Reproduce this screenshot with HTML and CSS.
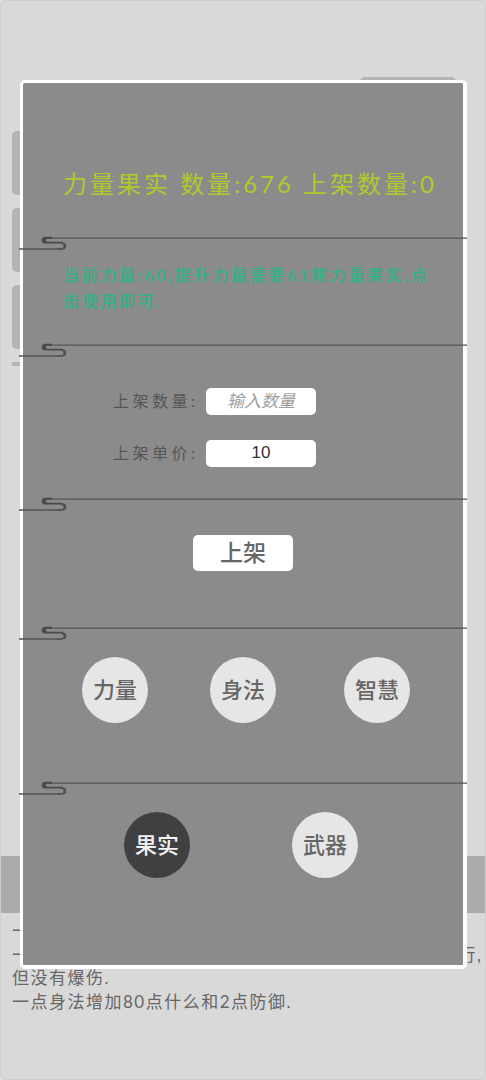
FILE: index.html
```html
<!DOCTYPE html>
<html lang="zh-CN">
<head>
    <meta charset="UTF-8">
    <meta name="viewport" content="width=device-width, initial-scale=1.0">
    <title>上架</title>
    <link rel="stylesheet" href="styles.css">
</head>
<body>

    <svg class="defs" width="0" height="0">
        <symbol id="divider" viewBox="0 0 448 16">
            <path class="line" d="M448 3.200H28"/>
            <path class="line" d="M43 14H0"/>
            <path class="hook" d="M33 1.800H26C21.500 1.800 21.500 8.600 26 8.600H44V6.800H29C26 6.800 26 3.800 29 3.800H33Z"/>
            <path class="hook-tail" d="M42 7.400H44C48.500 7.400 48.500 14.500 44 14.500H38V13.200H43C45 13.200 45 9 43 9H42Z"/>
        </symbol>
    </svg>

    <!-- 背后的页面 -->
    <div class="page">
        <div class="chip"></div>
        <div class="tabs">
            <div class="tab"></div>
            <div class="tab"></div>
            <div class="tab"></div>
            <div class="tab-end"></div>
        </div>
        <div class="band"></div>
        <div class="intro">
            <p>一点力量增加10点攻击力.</p>
            <p>一点智慧增加50点法力和5点魔法攻击,魔攻无视防御进行,<br>但没有爆伤.</p>
            <p>一点身法增加80点什么和2点防御.</p>
        </div>
    </div>

    <!-- 弹窗 -->
    <div class="modal">
        <div class="section section-title">
            <h2>力量果实 数量:676 上架数量:0</h2>
        </div>
        <svg class="divider"><use href="#divider"/></svg>

        <div class="section section-desc">
            <p>当前力量:60,提升力量需要61颗力量果实,点击使用即可.</p>
        </div>
        <svg class="divider"><use href="#divider"/></svg>

        <div class="section section-form">
            <label class="field">
                <span>上架数量:</span>
                <input type="text" placeholder="输入数量">
            </label>
            <label class="field">
                <span>上架单价:</span>
                <input type="text" value="10">
            </label>
        </div>
        <svg class="divider"><use href="#divider"/></svg>

        <div class="section section-submit">
            <button class="submit">上架</button>
        </div>
        <svg class="divider"><use href="#divider"/></svg>

        <div class="section section-stats">
            <button class="round">力量</button>
            <button class="round">身法</button>
            <button class="round">智慧</button>
        </div>
        <svg class="divider"><use href="#divider"/></svg>

        <div class="section section-kinds">
            <button class="round active">果实</button>
            <button class="round">武器</button>
        </div>
    </div>

</body>
</html>
```

FILE: styles.css
```css
body {
    margin: 0;
    font-family: Lato, "Noto Sans CJK SC", sans-serif;
    background-color: #d9d9d9;
}
.defs {
    position: absolute;
}
.line {
    fill: none;
    stroke: #555;
    stroke-width: 1.300;
}
.hook {
    fill: #4a4a4a;
}
.hook-tail {
    fill: #505050;
}
.page {
    height: 1078px;
    border: 1px solid #cfcfcf;
    border-radius: 6px;
    overflow: hidden;
}
.chip {
    width: 96px;
    height: 12px;
    margin: 76px 0 0 359px;
    background-color: #b4b4b4;
    border-radius: 5px 5px 0 0;
}
.tabs {
    display: flex;
    flex-direction: column;
    gap: 13px;
    margin: 42px 0 0 11px;
}
.tab {
    width: 20px;
    height: 64px;
    background-color: #b4b4b4;
    border-radius: 5px;
}
.tab-end {
    width: 20px;
    height: 4px;
    background-color: #b4b4b4;
}
.band {
    height: 57px;
    margin-top: 490px;
    background-color: #ababab;
}
.intro {
    padding: 6px 0 0 11px;
    color: #666;
    font-size: 17px;
    line-height: 23.500px;
    letter-spacing: 1.500px;
}
.intro p {
    margin: 0;
}
.modal {
    position: absolute;
    top: 80px;
    left: 20px;
    width: 440px;
    height: 882px;
    border: solid #fff;
    border-width: 3px 4px 4px 3px;
    border-radius: 5px;
    background-color: #8b8b8b;
}
.divider {
    display: block;
    width: 448px;
    height: 16px;
    margin: 0 -4px;
}
.section-title {
    height: 152px;
    box-sizing: border-box;
    padding: 84px 0 0 40px;
}
h2 {
    margin: 0;
    color: #aecb2c;
    font-size: 24px;
    font-weight: 400;
    line-height: 34px;
    letter-spacing: 3px;
    white-space: nowrap;
}
.section-desc {
    height: 91px;
    box-sizing: border-box;
    padding: 11px 30px 0 40px;
}
.section-desc p {
    margin: 0;
    color: #2fb384;
    font-size: 16px;
    font-weight: 500;
    line-height: 26px;
    letter-spacing: 2.700px;
}
.section-form {
    display: flex;
    flex-direction: column;
    gap: 24.500px;
    height: 138px;
    box-sizing: border-box;
    padding: 30px 0 0 90px;
}
.field {
    display: flex;
    align-items: center;
    gap: 10px;
    color: #555;
    font-size: 16px;
    line-height: 24px;
    letter-spacing: 3.500px;
}
.field span {
    width: 83px;
    padding-bottom: 1px;
    white-space: nowrap;
}
input {
    width: 110px;
    height: 27px;
    box-sizing: border-box;
    padding: 0;
    border: none;
    border-radius: 5px;
    background-color: #fff;
    color: #333;
    font-family: "Liberation Sans", "Noto Sans CJK SC", sans-serif;
    font-size: 17px;
    text-align: center;
}
input::placeholder {
    color: #a0a0a0;
    font-style: italic;
}
.section-submit {
    display: flex;
    justify-content: center;
    height: 113px;
    box-sizing: border-box;
    padding-top: 23px;
}
button {
    padding: 0;
    border: none;
    font-family: inherit;
    cursor: pointer;
}
.submit {
    width: 100px;
    height: 36px;
    padding-bottom: 3px;
    border-radius: 5px;
    background-color: #fff;
    color: #666;
    font-size: 23px;
    font-weight: 500;
    line-height: 30px;
}
.section-stats {
    display: grid;
    grid-template-columns: 128px 134px 66px;
    height: 139px;
    box-sizing: border-box;
    padding: 16px 0 0 59px;
}
.section-kinds {
    display: grid;
    grid-template-columns: 168px 66px;
    height: 169px;
    box-sizing: border-box;
    padding: 16px 0 0 101px;
}
.round {
    width: 66px;
    height: 66px;
    padding-bottom: 4px;
    border-radius: 50%;
    background-color: #e6e6e6;
    color: #666;
    font-size: 22px;
    font-weight: 500;
}
.round.active {
    background-color: #404040;
    color: #f2f2f2;
}
```
